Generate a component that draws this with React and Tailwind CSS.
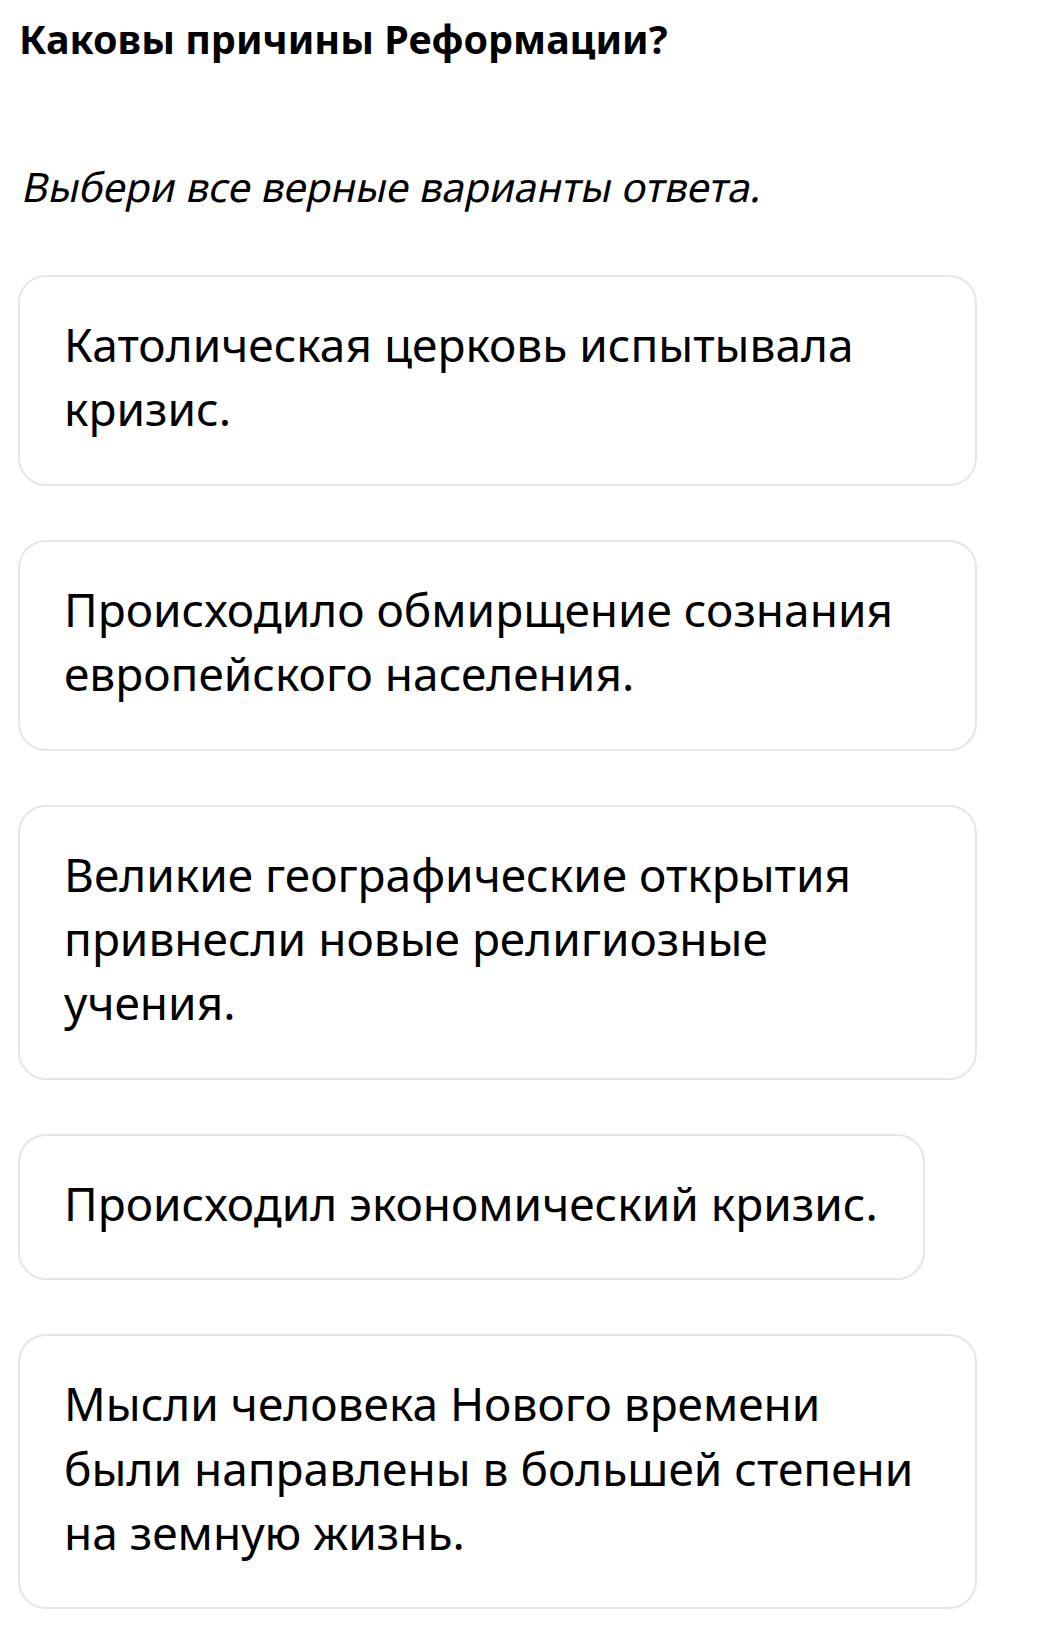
import React from "react";

const options = [
  "Католическая церковь испытывала кризис.",
  "Происходило обмирщение сознания европейского населения.",
  "Великие географические открытия привнесли новые религиозные учения.",
  "Происходил экономический кризис.",
  "Мысли человека Нового времени были направлены в большей степени на земную жизнь.",
];

export default function App() {
  return (
    <div
      className="min-h-[1637px] bg-white pl-[18px] pt-[12px] text-black"
      style={{ fontFamily: '"Noto Sans", "Open Sans", sans-serif' }}
    >
      <h1 className="text-[39.5px] font-bold leading-[54px] pl-[1px]">
        Каковы причины Реформации?
      </h1>
      <p className="mt-[94px] text-[40.5px] leading-[54px] pl-[0px]">
        <span className="inline-block origin-bottom skew-x-[-12deg]">
          Выбери все верные варианты ответа.
        </span>
      </p>
      <div className="mt-[61px] flex flex-col items-start gap-[54px]">
        {options.map((t) => (
          <div
            key={t}
            className="max-w-[959px] rounded-[28px] border-2 border-[#e5e5e5] bg-white pl-[44px] pr-[45px] pt-[35px] pb-[43px] text-[46px] leading-[64.4px]"
          >
            {t}
          </div>
        ))}
      </div>
    </div>
  );
}
